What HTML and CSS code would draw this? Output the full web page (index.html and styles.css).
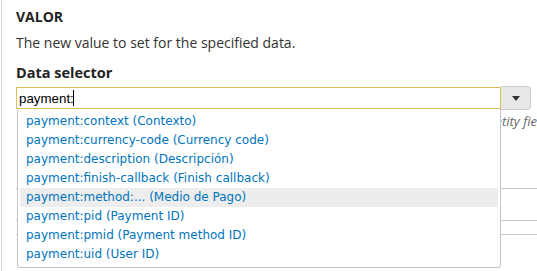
FILE: index.html
```html
<!DOCTYPE html>
<html lang="en">
<head>
    <meta charset="UTF-8">
    <meta name="viewport" content="width=device-width, initial-scale=1.0">
    <title>Data selector</title>

    <link rel="stylesheet" href="styles.css">
</head>
<body>
    <div class="page">
        <div class="form-item">
            <h4 class="section-title">VALOR</h4>
            <p class="description">The new value to set for the specified data.</p>

            <label class="field-label" for="data-selector">Data selector</label>
            <div class="autocomplete">
                <div class="input-row">
                    <input id="data-selector" class="form-text" type="text" value="payment:">
                    <span class="caret"></span>
                    <span class="dd-btn">
                        <svg width="8" height="5" viewBox="0 0 8 5"><path d="M0 0h8L4 5z" fill="#333"/></svg>
                    </span>
                </div>

                <ul class="ac-menu">
                    <li class="ac-item">payment:context (Contexto)</li>
                    <li class="ac-item">payment:currency-code (Currency code)</li>
                    <li class="ac-item">payment:description (Descripción)</li>
                    <li class="ac-item">payment:finish-callback (Finish callback)</li>
                    <li class="ac-item hover">payment:method:... (Medio de Pago)</li>
                    <li class="ac-item">payment:pid (Payment ID)</li>
                    <li class="ac-item">payment:pmid (Payment method ID)</li>
                    <li class="ac-item">payment:uid (User ID)</li>
                </ul>
            </div>

            <div class="help">The data selector helps you drill down into the data of an entity field.</div>

            <!-- tabla de abajo, casi toda tapada por el menu -->
            <div class="data-table">
                <div class="row"></div>
                <div class="row short"></div>
                <div class="row"></div>
            </div>
        </div>
    </div>
</body>
</html>
```

FILE: styles.css
```css
*{margin: 0; padding: 0; box-sizing: border-box;}

body{
    background-color: #fff;
    color: #333;
    font-family: "Open Sans", sans-serif;
    overflow: hidden;
}

.page{
    margin-left: 1px;
    border-left: 1px solid #d4d4d4;
    height: 271px;
    padding: 7px 0 0 14px;
    overflow: hidden;
}

.section-title{
    font-size: 14px;
    line-height: 19px;
    font-weight: bold;
    color: #222;
}

.description{
    margin-top: 7px;
    font-size: 14px;
    line-height: 19px;
    white-space: nowrap;
}

.field-label{
    display: block;
    margin-top: 11px;
    font-size: 14.5px;
    line-height: 19px;
    font-weight: bold;
    color: #222;
}

.autocomplete{
    position: relative;
    margin-top: 4px;
}

.input-row{
    display: flex;
    align-items: center;
    position: relative;
}

.form-text{
    width: 485px;
    height: 22px;
    border: 1px solid #e0bc5c;
    padding: 0 2px;
    font-family: "Liberation Sans", Arial, sans-serif;
    font-size: 13.33px;
    color: #000;
    outline: none;
}

.caret{
    position: absolute;
    left: 57px;
    top: 4px;
    width: 1px;
    height: 16px;
    background-color: #000;
}

.dd-btn{
    display: flex;
    align-items: center;
    justify-content: center;
    width: 30px;
    height: 24px;
    background-color: #e8e8e8;
    border: 1px solid #cdcdcd;
    border-left: 0;
    border-radius: 0 4px 4px 0;
}

.ac-menu{
    position: absolute;
    top: 23px;
    left: 1px;
    width: 484px;
    list-style: none;
    background-color: #fff;
    border: 1px solid #c5c5c5;
    border-top: 0;
    border-radius: 0 0 3px 3px;
    padding: 3px 2px 3px 2px;
    z-index: 100;
}

.ac-item{
    height: 19px;
    line-height: 19px;
    padding-left: 6px;
    font-family: "DejaVu Sans", Verdana, sans-serif;
    font-size: 12px;
    color: #0074bd;
    white-space: nowrap;
}

.ac-item.hover{
    background-color: #ededed;
}

/* el final del texto queda fuera de la ventana */
.help{
    width: 535px;
    margin-top: 2px;
    font-size: 13px;
    line-height: 18px;
    font-style: italic;
    color: #666;
    white-space: nowrap;
    text-align: right;
}

.data-table{
    margin-top: 58px;
    width: 540px;
}

.data-table .row{
    height: 32px;
    border-top: 1px solid #c8c8c8;
}

.data-table .row.short{
    height: 14px;
}

.data-table .row:last-child{
    height: 34px;
}
```
